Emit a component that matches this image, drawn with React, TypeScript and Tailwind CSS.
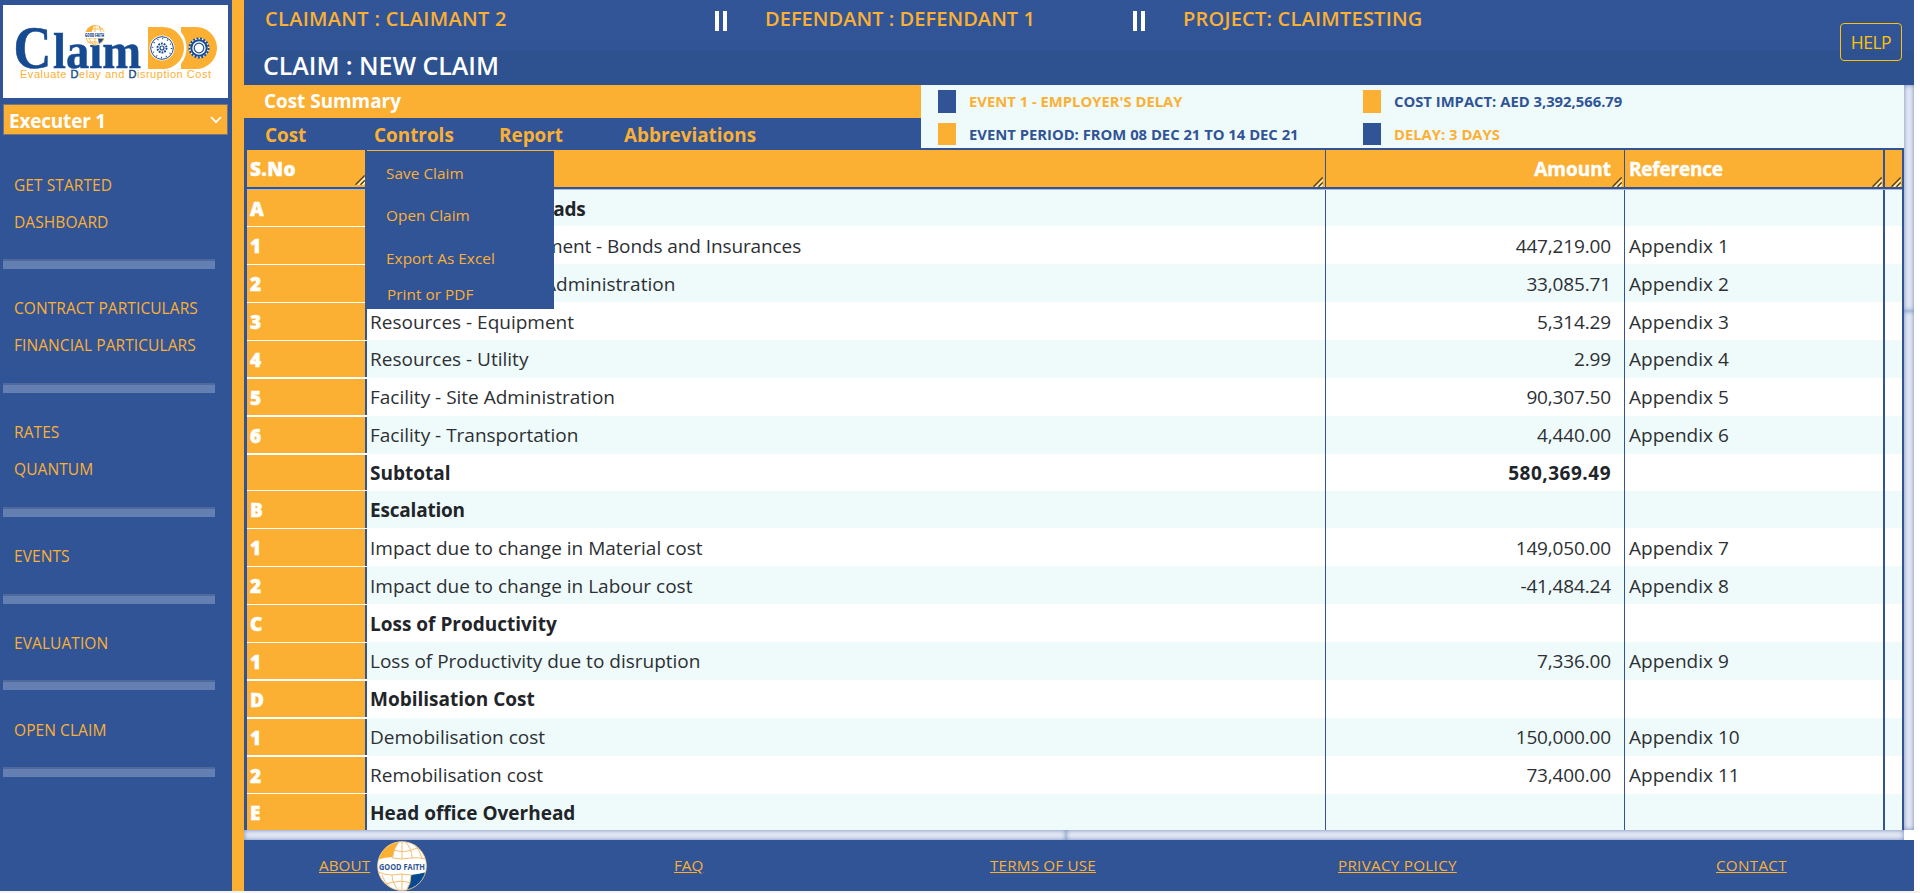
import React from "react";

type Row = { n: string; d: string; a?: string; r?: string; bold?: boolean; box: string; line: string; low?: boolean; fit?: string };

const T = "border-t";
const TB = "border-y";
const rows: Row[] = [
  { n: "A", d: "Preliminary Overheads", bold: true, box: "h-[36px]", line: "", fit: "tracking-[-0.14px]" },
  { n: "1", d: "Contractual Requirement - Bonds and Insurances", a: "447,219.00", r: "Appendix 1", box: "h-[38px]", line: T, low: true, fit: "tracking-[-0.1px]" },
  { n: "2", d: "Resources - Project Administration", a: "33,085.71", r: "Appendix 2", box: "h-[38px]", line: T, low: true },
  { n: "3", d: "Resources - Equipment", a: "5,314.29", r: "Appendix 3", box: "h-[38px]", line: T, low: true },
  { n: "4", d: "Resources - Utility", a: "2.99", r: "Appendix 4", box: "h-[38px]", line: TB },
  { n: "5", d: "Facility - Site Administration", a: "90,307.50", r: "Appendix 5", box: "h-[38px]", line: TB },
  { n: "6", d: "Facility - Transportation", a: "4,440.00", r: "Appendix 6", box: "h-[38px]", line: TB },
  { n: "", d: "Subtotal", a: "580,369.49", bold: true, box: "h-[37px]", line: TB },
  { n: "B", d: "Escalation", bold: true, box: "h-[37px]", line: "", fit: "tracking-[-0.2px]" },
  { n: "1", d: "Impact due to change in Material cost", a: "149,050.00", r: "Appendix 7", box: "h-[38px]", line: T, low: true },
  { n: "2", d: "Impact due to change in Labour cost", a: "-41,484.24", r: "Appendix 8", box: "h-[38px]", line: T, low: true },
  { n: "C", d: "Loss of Productivity", bold: true, box: "h-[38px]", line: T, low: true },
  { n: "1", d: "Loss of Productivity due to disruption", a: "7,336.00", r: "Appendix 9", box: "h-[38px]", line: TB },
  { n: "D", d: "Mobilisation Cost", bold: true, box: "h-[38px]", line: TB },
  { n: "1", d: "Demobilisation cost", a: "150,000.00", r: "Appendix 10", box: "h-[38px]", line: TB },
  { n: "2", d: "Remobilisation cost", a: "73,400.00", r: "Appendix 11", box: "h-[38px]", line: TB },
  { n: "E", d: "Head office Overhead", bold: true, box: "h-[36px]", line: "" },
];

const COLS = "grid grid-cols-[120px_959px_299px_260px_17px] grid-rows-[minmax(0,1fr)]";

function Grip({ place = "right-[1px] bottom-0" }: { place?: string }) {
  return (
    <svg className={`absolute h-[10px] w-[10px] ${place}`} viewBox="0 0 10 10" fill="none">
      <path d="M2.500 10.500L10.500 2.500M7 10.500L10.500 7" stroke="#fff3da" strokeWidth="1.400" />
      <path d="M.5 9.700L9.700 .5M5.500 9.700L9.700 5.500" stroke="#4a3a14" strokeWidth="1.300" />
    </svg>
  );
}

function Globe({ className }: { className: string }) {
  return (
    <svg className={className} viewBox="0 0 50 50" preserveAspectRatio="none">
      <defs>
        <clipPath id="globe"><circle cx="25" cy="25" r="24.500" /></clipPath>
      </defs>
      <g clipPath="url(#globe)">
        <rect width="50" height="50" fill="#fff" />
        <path d="M0 19V0H23Q17 8 15.500 16Q8 16 0 19Z" fill="#fbb034" />
        <path d="M34 34Q42 33 50 31V50H29Q34 42 34 34Z" fill="#084a91" />
        <g fill="none" stroke="#f3bd72" strokeWidth="1">
          <path d="M22 0Q16 8 15.500 17Q25 19 34 17Q41 16 49 18M28 0Q35 8 35 17M25 0V18M17 9Q27 13 40 7M37 3Q43 9 45 17" />
          <path d="M1 31Q8 34 15 34Q25 32 34 34M15 34Q15 42 22 50M25 33V50M34 34Q34 43 29 50M5 34Q7 41 13 46M9 43Q25 38 33 42" />
        </g>
      </g>
      <circle cx="25" cy="25" r="24.300" fill="none" stroke="#f0c58b" strokeWidth=".8" />
      <text x="2" y="28.500" textLength="46" lengthAdjust="spacingAndGlyphs" fontFamily="Open Sans" fontWeight="700" fontSize="9" fill="#305496">GOOD FAITH</text>
    </svg>
  );
}

function Logo() {
  return (
    <svg className="h-[93px] w-[225px]" viewBox="3 5 225 93">
      <g fontFamily="Liberation Serif" fontWeight="700" fill="#174b91" stroke="#174b91" strokeWidth=".5">
        <text x="13.500" y="68" fontSize="62" textLength="38" lengthAdjust="spacingAndGlyphs">C</text>
        <text x="53" y="68" fontSize="51" textLength="88" lengthAdjust="spacingAndGlyphs">laım</text>
      </g>
      <path fill="#fbb034" d="M148 27H163A21 21 0 0 1 163 69H148ZM181 27H196A21 21 0 0 1 196 69H181V64A26 26 0 0 0 181 32Z" />
      <circle cx="162" cy="48" r="12.500" fill="#fff" />
      <circle cx="162" cy="48" r="11.300" fill="none" stroke="#174b91" strokeWidth="1" />
      <circle cx="162" cy="48" r="9.500" fill="none" stroke="#174b91" strokeWidth="1.500" strokeDasharray="1 3.970" />
      <circle cx="162" cy="48" r="4.500" fill="none" stroke="#174b91" strokeWidth="2" strokeDasharray="1.800 1" />
      <circle cx="162" cy="48" r="2" fill="none" stroke="#174b91" strokeWidth="1.200" />
      <circle cx="199" cy="48" r="10" fill="#fff" />
      <circle cx="199" cy="48" r="9.500" fill="none" stroke="#174b91" strokeWidth="2" strokeDasharray="2 1.500" />
      <circle cx="199" cy="48" r="7.700" fill="none" stroke="#174b91" strokeWidth="2" />
      <circle cx="199" cy="48" r="4.800" fill="none" stroke="#174b91" strokeWidth="1.200" />
      <circle cx="95" cy="35" r="10.500" fill="#fff" />
      <path d="M86 32Q88 26 94 25.500L91.500 32Z" fill="#fbb034" />
      <path d="M98 38.500H104Q103 42 99 44Z" fill="#174b91" />
      <g fill="none" stroke="#fbb034" strokeWidth=".8">
        <circle cx="95" cy="35" r="9.500" />
        <path d="M95 25V32M99 26L101 32M87 29H103M86 38H104M89 38Q90 42 94 45M95 38V44M87 42H98" />
      </g>
      <rect x="84" y="32" width="21" height="6" fill="#fff" />
      <text x="85" y="37" textLength="19" lengthAdjust="spacingAndGlyphs" fontFamily="Open Sans" fontWeight="800" fontSize="5" fill="#174b91">GOOD FAITH</text>
      <text x="20" y="78" textLength="191" lengthAdjust="spacing" fontFamily="Liberation Sans" fontSize="11" fill="#fbb034">
        Evaluate <tspan fill="#174b91" stroke="#174b91" strokeWidth=".4">D</tspan>elay and <tspan fill="#174b91" stroke="#174b91" strokeWidth=".4">D</tspan>isruption Cost
      </text>
    </svg>
  );
}

const groups: { items: string[]; box: string; pad: string }[] = [
  { items: ["GET STARTED", "DASHBOARD"], box: "h-[124px]", pad: "pt-[22px]" },
  { items: ["CONTRACT PARTICULARS", "FINANCIAL PARTICULARS"], box: "h-[124px]", pad: "pt-[21px]" },
  { items: ["RATES", "QUANTUM"], box: "h-[124px]", pad: "pt-[21px]" },
  { items: ["EVENTS"], box: "h-[87px]", pad: "pt-[21px]" },
  { items: ["EVALUATION"], box: "h-[86px]", pad: "pt-[21px]" },
  { items: ["OPEN CLAIM"], box: "h-[87px]", pad: "pt-[22px]" },
];

function Sidebar() {
  return (
    <aside className="h-[891px] w-[232px] shrink-0 bg-[#305496] px-[3px] pt-[5px]">
      <div className="h-[93px] w-[225px] bg-white"><Logo /></div>
      <div className="mt-[6px] flex h-[31px] w-[225px] items-center justify-between border border-[#76767a] bg-[#fbb034] pr-[5px] pl-[5px] text-white">
        <span className="pt-[4px] text-[19px] leading-none font-bold tracking-[-0.2px]">Executer 1</span>
        <svg className="h-[8px] w-[12px]" viewBox="0 0 12 8" fill="none" stroke="#fff" strokeWidth="1.800"><path d="M1 1L6 6.200L11 1" /></svg>
      </div>
      <nav className="pt-[10px]">
        {groups.map((g) => (
          <div key={g.items[0]} className={`flex w-[212px] flex-col justify-between ${g.box}`}>
            <div className={`pl-[11px] ${g.pad}`}>
              {g.items.map((i) => (
                <div key={i} className="h-[37px] text-[15.500px] leading-[37px] tracking-[0.08px] whitespace-nowrap text-[#fbb034]">{i}</div>
              ))}
            </div>
            <div className="h-[10px] shrink-0 border-t-2 border-[#50699c] bg-[#6480b3]" />
          </div>
        ))}
      </nav>
    </aside>
  );
}

export default function App() {
  return (
    <div className="h-[893px] w-[1920px] overflow-hidden bg-white font-['Open_Sans','Noto_Sans',sans-serif] text-[#212529]">
      <div className="flex h-[891px] w-[1914px]">
        <Sidebar />
        <div className="w-[12px] shrink-0 bg-[#fbb034]" />
        <main className="flex w-[1670px] flex-col">
          <header className="flex h-[85px] justify-between bg-linear-to-b from-[#315596] from-0% via-[#305495] via-58% to-[#2e5190] to-60% pr-[12px] pl-[20px]">
            <div>
              <div className="flex h-[38px] items-center text-[20px] font-semibold whitespace-nowrap text-[#fbb034]">
                <span className="w-[448px] pl-px tracking-[0.3px]">CLAIMANT : CLAIMANT 2</span>
                <span className="flex w-[53px] gap-[4px] pt-[3px] pl-[3px]"><i className="h-[20px] w-[4px] bg-white" /><i className="h-[20px] w-[4px] bg-white" /></span>
                <span className="w-[367px] tracking-[0.05px]">DEFENDANT : DEFENDANT 1</span>
                <span className="flex w-[51px] gap-[4px] pt-[3px] pl-[1px]"><i className="h-[20px] w-[4px] bg-white" /><i className="h-[20px] w-[4px] bg-white" /></span>
                <span className="tracking-[0.22px]">PROJECT: CLAIMTESTING</span>
              </div>
              <div className="mt-[12px] -ml-px text-[25px] leading-[31px] font-semibold tracking-[-0.05px] text-white">CLAIM : NEW CLAIM</div>
            </div>
            <button className="mt-[23px] h-[38px] w-[62px] rounded-[4px] border border-[#ffc107] pt-px text-[17.500px] leading-none tracking-[-0.5px] text-[#ffc107]">HELP</button>
          </header>
          <div className="flex h-[745px]">
            <div className="w-[1660px]">
              <div className="flex h-[63px]">
                <div className="w-[677px]">
                  <div className="h-[33px] bg-[#fbb034] pl-[20px] text-[18.900px] leading-[33px] font-bold text-white">Cost Summary</div>
                  <div className="relative flex h-[30px] bg-[#305496] pl-[21px] text-[18.900px] leading-[35px] font-bold text-[#fbb034]">
                    <span className="w-[109px]">Cost</span>
                    <span className="w-[125px]">Controls</span>
                    <span className="w-[125px]">Report</span>
                    <span>Abbreviations</span>
                    <div className="absolute top-[33px] left-[121px] z-10 h-[158px] w-[189px] bg-[#305496] pl-[21px] text-[15.300px] font-normal tracking-[0.06px]">
                      <div className="h-[43px] leading-[45px]">Save Claim</div>
                      <div className="h-[42px] leading-[42px]">Open Claim</div>
                      <div className="h-[43px] leading-[44px]">Export As Excel</div>
                      <div className="h-[30px] pl-px leading-[30px]">Print or PDF</div>
                    </div>
                  </div>
                </div>
                <div className="grid w-[983px] grid-cols-[425px_1fr] grid-rows-[33px_30px] bg-[#effafa] pl-[17px] text-[14.800px] leading-none font-bold">
                  <div className="flex items-center gap-[13px] text-[#fbb034]"><i className="h-[23px] w-[18px] bg-[#305496]" /><span className="pb-px">EVENT 1 - EMPLOYER'S DELAY</span></div>
                  <div className="flex items-center gap-[13px] text-[#305496]"><i className="h-[23px] w-[18px] bg-[#fbb034]" /><span className="pb-px">COST IMPACT: AED 3,392,566.79</span></div>
                  <div className="flex items-center gap-[13px] pt-[2px] text-[#305496]"><i className="h-[22px] w-[18px] bg-[#fbb034]" /><span className="pt-px">EVENT PERIOD: FROM 08 DEC 21 TO 14 DEC 21</span></div>
                  <div className="flex items-center gap-[13px] pt-[2px] text-[#fbb034]"><i className="h-[22px] w-[18px] bg-[#305496]" /><span className="pt-px">DELAY: 3 DAYS</span></div>
                </div>
              </div>
              <div className="h-[682px] border-t-2 border-r-2 border-l-[3px] border-[#305496]">
                <div className={`${COLS} h-[37px] bg-[#fbb034] text-[19px] leading-[38px] font-extrabold text-white`}>
                  <div className="relative border-r-2 border-[#305496] pl-[3px] tracking-[0.4px] [-webkit-text-stroke:0.4px_white]">S.No<Grip place="right-0 bottom-[2px]" /></div>
                  <div className="relative border-r border-[#305496]"><Grip place="right-[2px] bottom-0" /></div>
                  <div className="relative border-r border-[#305496] pr-[13px] text-right font-bold [-webkit-text-stroke:0.4px_white]">Amount<Grip place="right-[2px] bottom-0" /></div>
                  <div className="relative border-r-2 border-[#305496] pl-[4px] font-bold tracking-[-0.2px] [-webkit-text-stroke:0.4px_white]">Reference<Grip /></div>
                  <div className="relative"><Grip /></div>
                </div>
                <div className="h-[3px] border-t-2 border-b border-t-[#305496] border-b-[#a9b9d6] bg-white" />
                {rows.map((r, i) => (
                  <div key={i} className={`${COLS} ${r.box} ${i % 2 ? "bg-white" : "bg-[#effafa]"} text-[19px] whitespace-nowrap ${r.low ? "leading-[40px]" : "leading-[38px]"} ${r.bold ? "font-bold" : "text-[#2c3034]"}`}>
                    <div className={`h-full overflow-hidden border-white bg-[#fbb034] ${r.line}`}>
                      <div className="h-full border-r-2 border-[#305496] pl-[3px] leading-[38px] font-extrabold text-white [-webkit-text-stroke:0.5px_white]">{r.n}</div>
                    </div>
                    <div className={`border-r border-[#305496] pl-[3px] ${r.fit ?? ""}`}>{r.d}</div>
                    <div className={`border-r border-[#305496] pr-[13px] text-right ${r.bold ? "tracking-[0.5px]" : "tracking-[-0.15px]"}`}>{r.a}</div>
                    <div className="border-r-2 border-[#305496] pl-[4px]">{r.r}</div>
                    <div />
                  </div>
                ))}
              </div>
            </div>
            <div className="flex w-[10px] flex-col bg-[#e4e9f4]">
              <div className="h-[226px] shadow-[inset_0_0_5px_#6f88bb]" />
              <div className="flex-1 shadow-[inset_0_0_5px_#6f88bb]" />
            </div>
          </div>
          <div className="flex h-[10px] w-[1660px] bg-[#e4e9f4]">
            <div className="w-[822px] shadow-[inset_0_0_5px_#6f88bb]" />
            <div className="flex-1 shadow-[inset_0_0_5px_#6f88bb]" />
          </div>
          <footer className="flex h-[51px] items-center bg-[#305496] text-[15.200px] text-[#fbb034]">
            <div className="flex w-[430px] items-center gap-[7px] pl-[75px]"><span className="tracking-[0.1px] underline">ABOUT</span><Globe className="h-[50px] w-[50px]" /></div>
            <div className="w-[316px] underline">FAQ</div>
            <div className="w-[348px] tracking-[0.2px] underline">TERMS OF USE</div>
            <div className="w-[378px] tracking-[0.3px] underline">PRIVACY POLICY</div>
            <div className="tracking-[0.3px] underline">CONTACT</div>
          </footer>
        </main>
      </div>
      <div className="h-[2px] bg-[#f3f3f3]" />
    </div>
  );
}
